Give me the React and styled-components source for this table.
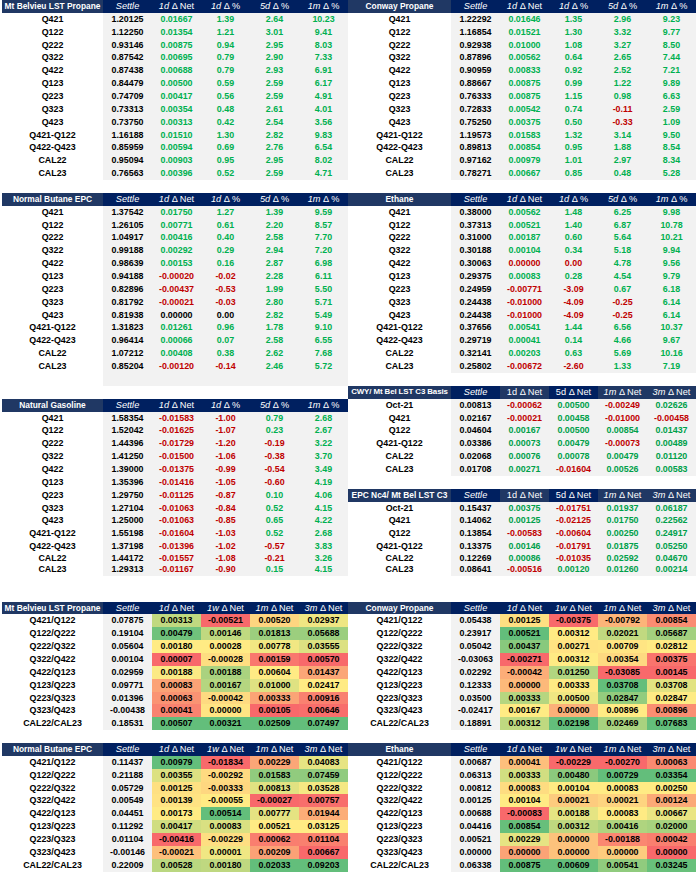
import React from 'react';
import styled, { createGlobalStyle } from 'styled-components';

const R = 12.86;
const NAVY = '#002060';
const SLATE = '#203864';
const GREEN = '#00b050';
const GREEN_DEEP = '#00a04a';
const RED = '#c00000';

const GlobalStyle = createGlobalStyle`
  html, body { margin: 0; padding: 0; background: #ffffff; }
  body { font-family: "Liberation Sans", Arial, sans-serif; }
`;

const Page = styled.div`
  display: grid;
  grid-template-columns: 346px 348px;
  align-items: start;
  padding-left: 2px;
  width: 698px;
  box-sizing: border-box;
`;

const Column = styled.div`
  display: flex;
  flex-direction: column;
`;

const Gap = styled.div`
  height: ${(p) => p.$rows * R}px;
`;

const Table = styled.div`
  display: flex;
  flex-direction: column;
  --label: ${(p) => p.$label}px;
`;

const Row = styled.div`
  display: grid;
  grid-template-columns: var(--label) repeat(5, 49px);
  height: ${(p) => (p.$short ? 10 : R)}px;
  line-height: ${(p) => (p.$short ? 10 : R)}px;
`;

const HeadCell = styled.div`
  background: ${(p) => (p.$shade === 'slate' ? SLATE : NAVY)};
  color: #ffffff;
  font-size: ${(p) => (p.$fit ? 7.9 : p.$strong ? 8.4 : 9.2)}px;
  letter-spacing: ${(p) => (p.$fit ? '-0.1px' : 'normal')};
  font-weight: ${(p) => (p.$strong ? 700 : 400)};
  text-align: center;
  white-space: nowrap;
  overflow: hidden;
`;

const Lead = styled.span`
  font-style: ${(p) => (p.$italic ? 'italic' : 'normal')};
`;

const LabelCell = styled.div`
  background: #ffffff;
  color: #000000;
  font-size: 8.9px;
  font-weight: 700;
  text-align: center;
  white-space: nowrap;
  overflow: hidden;
`;

const toneColor = (tone, deep) =>
  tone === 'pos' ? (deep ? GREEN_DEEP : GREEN) : tone === 'neg' ? RED : '#000000';

const ValueCell = styled.div.attrs((p) => (p.$heat ? { style: { background: p.$heat } } : {}))`
  background: #f2f2f2;
  color: ${(p) => toneColor(p.$tone, p.$deep)};
  font-size: 8.9px;
  font-weight: 700;
  text-align: center;
  white-space: nowrap;
  overflow: hidden;
`;

/* ---------- colour scale (red / yellow / green, per column) ---------- */
const C_MIN = [248, 105, 107];
const C_MID = [255, 235, 132];
const C_MAX = [99, 190, 123];
const mix = (a, b, t) =>
  `rgb(${a.map((v, i) => Math.round(v + (b[i] - v) * t)).join(',')})`;

function makeScale(values) {
  const nums = values.map(parseFloat);
  const sorted = [...nums].sort((a, b) => a - b);
  const n = sorted.length;
  const min = sorted[0];
  const max = sorted[n - 1];
  const mid = n % 2 ? sorted[(n - 1) / 2] : (sorted[n / 2 - 1] + sorted[n / 2]) / 2;
  return (s) => {
    const v = parseFloat(s);
    if (v <= mid) {
      const t = mid === min ? 1 : (v - min) / (mid - min);
      return mix(C_MIN, C_MID, t);
    }
    const t = max === mid ? 0 : (v - mid) / (max - mid);
    return mix(C_MID, C_MAX, t);
  };
}

/* ---------------------------- column heads ---------------------------- */
const TOP_COLS = [
  { lead: 'Settle', italic: true },
  { lead: '1d', rest: ' Δ Net', italic: true },
  { lead: '1d', rest: ' Δ %', italic: true },
  { lead: '5d', rest: ' Δ %', italic: true },
  { lead: '1m', rest: ' Δ %', italic: true },
];

const BASIS_COLS = [
  { lead: 'Settle', italic: true },
  { lead: '1d', rest: ' Δ Net', italic: false, shade: 'slate' },
  { lead: '5d', rest: ' Δ Net', italic: false },
  { lead: '1m', rest: ' Δ Net', italic: true, shade: 'slate' },
  { lead: '3m', rest: ' Δ Net', italic: true, shade: 'slate' },
];

const SPREAD_COLS = [
  { lead: 'Settle', italic: true },
  { lead: '1d', rest: ' Δ Net', italic: true },
  { lead: '1w', rest: ' Δ Net', italic: true },
  { lead: '1m', rest: ' Δ Net', italic: true },
  { lead: '3m', rest: ' Δ Net', italic: true },
];

/* -------------------------------- data -------------------------------- */
const split = (txt) => txt.trim().split('\n').map((l) => l.trim().split(/\s+/));

const MTB = split(`
Q421 1.20125 0.01667 1.39 2.64 10.23
Q122 1.12250 0.01354 1.21 3.01 9.41
Q222 0.93146 0.00875 0.94 2.95 8.03
Q322 0.87542 0.00695 0.79 2.90 7.33
Q422 0.87438 0.00688 0.79 2.93 6.91
Q123 0.84479 0.00500 0.59 2.59 6.17
Q223 0.74709 0.00417 0.56 2.59 4.91
Q323 0.73313 0.00354 0.48 2.61 4.01
Q423 0.73750 0.00313 0.42 2.54 3.56
Q421-Q122 1.16188 0.01510 1.30 2.82 9.83
Q422-Q423 0.85959 0.00594 0.69 2.76 6.54
CAL22 0.95094 0.00903 0.95 2.95 8.02
CAL23 0.76563 0.00396 0.52 2.59 4.71
`);

const CONWAY = split(`
Q421 1.22292 0.01646 1.35 2.96 9.23
Q122 1.16854 0.01521 1.30 3.32 9.77
Q222 0.92938 0.01000 1.08 3.27 8.50
Q322 0.87896 0.00562 0.64 2.65 7.44
Q422 0.90959 0.00833 0.92 2.52 7.21
Q123 0.88667 0.00875 0.99 1.22 9.89
Q223 0.76333 0.00875 1.15 0.98 6.63
Q323 0.72833 0.00542 0.74 -0.11 2.59
Q423 0.75250 0.00375 0.50 -0.33 1.09
Q421-Q122 1.19573 0.01583 1.32 3.14 9.50
Q422-Q423 0.89813 0.00854 0.95 1.88 8.54
CAL22 0.97162 0.00979 1.01 2.97 8.34
CAL23 0.78271 0.00667 0.85 0.48 5.28
`);

const BUTANE = split(`
Q421 1.37542 0.01750 1.27 1.39 9.59
Q122 1.26105 0.00771 0.61 2.20 8.57
Q222 1.04917 0.00416 0.40 2.58 7.70
Q322 0.99188 0.00292 0.29 2.94 7.20
Q422 0.98639 0.00153 0.16 2.87 6.98
Q123 0.94188 -0.00020 -0.02 2.28 6.11
Q223 0.82896 -0.00437 -0.53 1.99 5.50
Q323 0.81792 -0.00021 -0.03 2.80 5.71
Q423 0.81938 0.00000 0.00 2.82 5.49
Q421-Q122 1.31823 0.01261 0.96 1.78 9.10
Q422-Q423 0.96414 0.00066 0.07 2.58 6.55
CAL22 1.07212 0.00408 0.38 2.62 7.68
CAL23 0.85204 -0.00120 -0.14 2.46 5.72
`);

const ETHANE = split(`
Q421 0.38000 0.00562 1.48 6.25 9.98
Q122 0.37313 0.00521 1.40 6.87 10.78
Q222 0.31000 0.00187 0.60 5.64 10.21
Q322 0.30188 0.00104 0.34 5.18 9.94
Q422 0.30063 0.00000 0.00 4.78 9.56
Q123 0.29375 0.00083 0.28 4.54 9.79
Q223 0.24959 -0.00771 -3.09 0.67 6.18
Q323 0.24438 -0.01000 -4.09 -0.25 6.14
Q423 0.24438 -0.01000 -4.09 -0.25 6.14
Q421-Q122 0.37656 0.00541 1.44 6.56 10.37
Q422-Q423 0.29719 0.00041 0.14 4.66 9.67
CAL22 0.32141 0.00203 0.63 5.69 10.16
CAL23 0.25802 -0.00672 -2.60 1.33 7.19
`);

const NATGAS = split(`
Q421 1.58354 -0.01583 -1.00 0.79 2.68
Q122 1.52042 -0.01625 -1.07 0.23 2.67
Q222 1.44396 -0.01729 -1.20 -0.19 3.22
Q322 1.41250 -0.01500 -1.06 -0.38 3.70
Q422 1.39000 -0.01375 -0.99 -0.54 3.49
Q123 1.35396 -0.01416 -1.05 -0.60 4.19
Q223 1.29750 -0.01125 -0.87 0.10 4.06
Q323 1.27104 -0.01063 -0.84 0.52 4.15
Q423 1.25000 -0.01063 -0.85 0.65 4.22
Q421-Q122 1.55198 -0.01604 -1.03 0.52 2.68
Q422-Q423 1.37198 -0.01396 -1.02 -0.57 3.83
CAL22 1.44172 -0.01557 -1.08 -0.21 3.26
CAL23 1.29313 -0.01167 -0.90 0.15 4.15
`);

const CWY = split(`
Oct-21 0.00813 -0.00062 0.00500 -0.00249 0.02626
Q421 0.02167 -0.00021 0.00458 -0.01000 -0.00458
Q122 0.04604 0.00167 0.00500 0.00854 0.01437
Q421-Q122 0.03386 0.00073 0.00479 -0.00073 0.00489
CAL22 0.02068 0.00076 0.00078 0.00479 0.01120
CAL23 0.01708 0.00271 -0.01604 0.00526 0.00583
`);

const EPC = split(`
Oct-21 0.15437 0.00375 -0.01751 0.01937 0.06187
Q421 0.14062 0.00125 -0.02125 0.01750 0.22562
Q122 0.13854 -0.00583 -0.00604 0.00250 0.24917
Q421-Q122 0.13375 0.00146 -0.01791 0.01875 0.05250
CAL22 0.12269 0.00086 -0.01035 0.02592 0.04670
CAL23 0.08641 -0.00516 0.00120 0.01260 0.00214
`);

const SP_MTB = split(`
Q421/Q122 0.07875 0.00313 -0.00521 0.00520 0.02937
Q122/Q222 0.19104 0.00479 0.00146 0.01813 0.05688
Q222/Q322 0.05604 0.00180 0.00028 0.00778 0.03555
Q322/Q422 0.00104 0.00007 -0.00028 0.00159 0.00570
Q422/Q123 0.02959 0.00188 0.00188 0.00604 0.01437
Q123/Q223 0.09771 0.00083 0.00167 0.01000 0.02417
Q223/Q323 0.01396 0.00063 -0.00042 0.00333 0.00916
Q323/Q423 -0.00438 0.00041 0.00000 0.00105 0.00646
CAL22/CAL23 0.18531 0.00507 0.00321 0.02509 0.07497
`);

const SP_CONWAY = split(`
Q421/Q122 0.05438 0.00125 -0.00375 -0.00792 0.00854
Q122/Q222 0.23917 0.00521 0.00312 0.02021 0.05687
Q222/Q322 0.05042 0.00437 0.00271 0.00709 0.02812
Q322/Q422 -0.03063 -0.00271 0.00312 0.00354 0.00375
Q422/Q123 0.02292 -0.00042 0.01250 -0.03085 0.00145
Q123/Q223 0.12333 0.00000 0.00333 0.03708 0.03708
Q223/Q323 0.03500 0.00333 0.00500 0.02847 0.02847
Q323/Q423 -0.02417 0.00167 0.00000 0.00896 0.00896
CAL22/CAL23 0.18891 0.00312 0.02198 0.02469 0.07683
`);

const SP_BUTANE = split(`
Q421/Q122 0.11437 0.00979 -0.01834 0.00229 0.04083
Q122/Q222 0.21188 0.00355 -0.00292 0.01583 0.07459
Q222/Q322 0.05729 0.00125 -0.00333 0.00813 0.03528
Q322/Q422 0.00549 0.00139 -0.00055 -0.00027 0.00757
Q422/Q123 0.04451 0.00173 0.00514 0.00777 0.01944
Q123/Q223 0.11292 0.00417 0.00083 0.00521 0.03125
Q223/Q323 0.01104 -0.00416 -0.00229 0.00062 0.01104
Q323/Q423 -0.00146 -0.00021 0.00001 0.00209 0.00667
CAL22/CAL23 0.22009 0.00528 0.00180 0.02033 0.09203
`);

const SP_ETHANE = split(`
Q421/Q122 0.00687 0.00041 -0.00229 -0.00270 0.00063
Q122/Q222 0.06313 0.00333 0.00480 0.00729 0.03354
Q222/Q322 0.00812 0.00083 0.00104 0.00083 0.00250
Q322/Q422 0.00125 0.00104 0.00021 0.00021 0.00124
Q422/Q123 0.00688 -0.00083 0.00188 0.00083 0.00667
Q123/Q223 0.04416 0.00854 0.00312 0.00416 0.02000
Q223/Q323 0.00521 0.00229 0.00000 -0.00188 0.00042
Q323/Q423 0.00000 0.00000 0.00000 0.00000 0.00000
CAL22/CAL23 0.06338 0.00875 0.00609 0.00541 0.03245
`);

/* ----------------------------- components ----------------------------- */
function HeadRow({ title, cols, fit }) {
  return (
    <Row>
      <HeadCell $strong $fit={fit} $shade="slate">{title}</HeadCell>
      {cols.map((c, i) => (
        <HeadCell key={i} $shade={c.shade}>
          <Lead $italic={c.italic}>{c.lead}</Lead>
          {c.rest}
        </HeadCell>
      ))}
    </Row>
  );
}

function tone(s, zero) {
  const v = parseFloat(s);
  if (v < 0) return 'neg';
  if (v > 0) return 'pos';
  return zero;
}

function QuoteTable({ title, cols, rows, label, zero = 'plain', deep, fit, padRows = 0, shortAt = -1 }) {
  return (
    <Table $label={label}>
      <HeadRow title={title} cols={cols} fit={fit} />
      {rows.map(([name, settle, ...changes], r) => (
        <Row key={name} $short={r === shortAt}>
          <LabelCell>{name}</LabelCell>
          <ValueCell $tone="plain">{settle}</ValueCell>
          {changes.map((c, i) => (
            <ValueCell key={i} $tone={tone(c, zero)} $deep={deep}>
              {c}
            </ValueCell>
          ))}
        </Row>
      ))}
      {Array.from({ length: padRows }, (_, i) => (
        <Row key={`pad${i}`}>
          <LabelCell />
          {[0, 1, 2, 3, 4].map((k) => (
            <ValueCell key={k} />
          ))}
        </Row>
      ))}
    </Table>
  );
}

function SpreadTable({ title, rows, label }) {
  const scales = [2, 3, 4, 5].map((col) => makeScale(rows.map((r) => r[col])));
  return (
    <Table $label={label}>
      <HeadRow title={title} cols={SPREAD_COLS} />
      {rows.map(([name, settle, ...changes]) => (
        <Row key={name}>
          <LabelCell>{name}</LabelCell>
          <ValueCell $tone="plain">{settle}</ValueCell>
          {changes.map((c, i) => (
            <ValueCell key={i} $tone="plain" $heat={scales[i](c)}>
              {c}
            </ValueCell>
          ))}
        </Row>
      ))}
    </Table>
  );
}

export default function App() {
  return (
    <>
      <GlobalStyle />
      <Page>
        <Column>
          <QuoteTable title="Mt Belvieu LST Propane" cols={TOP_COLS} rows={MTB} label={101} />
          <Gap $rows={1} />
          <QuoteTable title="Normal Butane EPC" cols={TOP_COLS} rows={BUTANE} label={101} padRows={1} />
          <Gap $rows={1} />
          <QuoteTable title="Natural Gasoline" cols={TOP_COLS} rows={NATGAS} label={101} shortAt={11} />
          <Gap $rows={2} />
          <SpreadTable title="Mt Belvieu LST Propane" rows={SP_MTB} label={101} />
          <Gap $rows={1} />
          <SpreadTable title="Normal Butane EPC" rows={SP_BUTANE} label={101} />
        </Column>
        <Column>
          <QuoteTable title="Conway Propane" cols={TOP_COLS} rows={CONWAY} label={103} />
          <Gap $rows={1} />
          <QuoteTable title="Ethane" cols={TOP_COLS} rows={ETHANE} label={103} zero="neg" />
          <Gap $rows={1} />
          <QuoteTable title="CWY/ Mt Bel LST C3 Basis" cols={BASIS_COLS} rows={CWY} label={103} deep fit />
          <Gap $rows={1} />
          <QuoteTable title="EPC Nc4/ Mt Bel LST C3" cols={BASIS_COLS} rows={EPC} label={103} deep shortAt={4} />
          <Gap $rows={2} />
          <SpreadTable title="Conway Propane" rows={SP_CONWAY} label={103} />
          <Gap $rows={1} />
          <SpreadTable title="Ethane" rows={SP_ETHANE} label={103} />
        </Column>
      </Page>
    </>
  );
}
